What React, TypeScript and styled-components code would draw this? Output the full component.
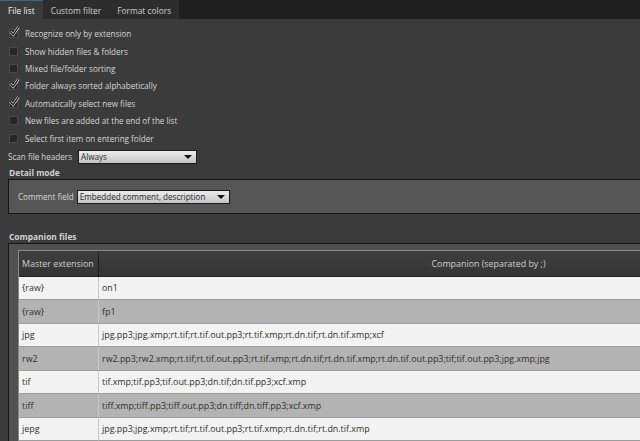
import styled, { createGlobalStyle } from "styled-components";

const GlobalStyle = createGlobalStyle`
  html, body {
    margin: 0;
    padding: 0;
    background: #3b3b3b;
    overflow: hidden;
  }
  body {
    font-family: "Open Sans", "Noto Sans", sans-serif;
    font-size: 8.1px;
    color: #d6d6d6;
  }
`;

const tabs = ["File list", "Custom filter", "Format colors"];

const options = [
  { label: "Recognize only by extension", checked: true },
  { label: "Show hidden files & folders", checked: false },
  { label: "Mixed file/folder sorting", checked: false },
  { label: "Folder always sorted alphabetically", checked: true },
  { label: "Automatically select new files", checked: true },
  { label: "New files are added at the end of the list", checked: false },
  { label: "Select first item on entering folder", checked: false },
];

const companions = [
  ["{raw}", "on1"],
  ["{raw}", "fp1"],
  ["jpg", "jpg.pp3;jpg.xmp;rt.tif;rt.tif.out.pp3;rt.tif.xmp;rt.dn.tif;rt.dn.tif.xmp;xcf"],
  [
    "rw2",
    "rw2.pp3;rw2.xmp;rt.tif;rt.tif.out.pp3;rt.tif.xmp;rt.dn.tif;rt.dn.tif.xmp;rt.dn.tif.out.pp3;tif;tif.out.pp3;jpg.xmp;jpg",
  ],
  ["tif", "tif.xmp;tif.pp3;tif.out.pp3;dn.tif;dn.tif.pp3;xcf.xmp"],
  ["tiff", "tiff.xmp;tiff.pp3;tiff.out.pp3;dn.tiff;dn.tiff.pp3;xcf.xmp"],
  ["jepg", "jpg.pp3;jpg.xmp;rt.tif;rt.tif.out.pp3;rt.tif.xmp;rt.dn.tif;rt.dn.tif.xmp"],
];

function Check({ checked }: { checked: boolean }) {
  return (
    <Box>
      {checked && (
        <CheckMark viewBox="0 0 12 12">
          <path d="M1.5 6.5 L4.5 9.5 L10.5 1" fill="none" stroke="#eaeaea" strokeWidth="2.8" />
          <path d="M1.5 6.5 L4.5 9.5 L10.5 1" fill="none" stroke="#151515" strokeWidth="1.4" />
        </CheckMark>
      )}
    </Box>
  );
}

function Combo({ value, width }: { value: string; width: number }) {
  return (
    <ComboBox $width={width}>
      <span>{value}</span>
      <Arrow />
    </ComboBox>
  );
}

export default function App() {
  return (
    <>
      <GlobalStyle />
      <TabBar>
        {tabs.map((t, i) => (
          <Tab key={t} $active={i === 0}>
            {t}
          </Tab>
        ))}
      </TabBar>
      <Page>
        <CheckList>
          {options.map((o) => (
            <CheckRow key={o.label}>
              <Check checked={o.checked} />
              <span>{o.label}</span>
            </CheckRow>
          ))}
        </CheckList>
        <FieldRow $gap={6}>
          <span>Scan file headers</span>
          <Combo value="Always" width={119} />
        </FieldRow>

        <SectionTitle>Detail mode</SectionTitle>
        <DetailFrame>
          <FieldRow>
            <span>Comment field</span>
            <Combo value="Embedded comment, description" width={153} />
          </FieldRow>
        </DetailFrame>

        <SectionTitle $gap={16}>Companion files</SectionTitle>
        <CompanionFrame>
          <Table>
            <HeadCell>Master extension</HeadCell>
            <HeadCell $center>Companion (separated by ;)</HeadCell>
            {companions.map(([ext, list], i) => (
              <Row key={i} $odd={i % 2 === 1}>
                <Cell>{ext}</Cell>
                <Cell>{list}</Cell>
              </Row>
            ))}
          </Table>
        </CompanionFrame>
      </Page>
    </>
  );
}

const TabBar = styled.div`
  display: flex;
  height: 19px;
  background: #1f1f1f;
`;

const Tab = styled.div<{ $active?: boolean }>`
  display: flex;
  align-items: center;
  padding: 1px 8px 0 8px;
  font-size: 8.4px;
  background: ${(p) => (p.$active ? "#3b3b3b" : "#2c2c2c")};
  color: ${(p) => (p.$active ? "#f0f0f0" : "#cfcfcf")};
  border-top: 1px solid ${(p) => (p.$active ? "#3f6489" : "#2c2c2c")};
`;

const Page = styled.div`
  width: 868px;
  padding-left: 8px;
`;

const CheckList = styled.div`
  display: flex;
  flex-direction: column;
  padding-top: 6px;
`;

const CheckRow = styled.div`
  display: flex;
  align-items: center;
  gap: 7px;
  height: 17.4px;
  padding-left: 1px;
`;

const Box = styled.div`
  position: relative;
  width: 7px;
  height: 7px;
  background: #262626;
  border: 1px solid #4a4a4a;
`;

const CheckMark = styled.svg`
  position: absolute;
  left: -1px;
  top: -4px;
  width: 11px;
  height: 11px;
`;

const FieldRow = styled.div<{ $gap?: number }>`
  display: flex;
  align-items: center;
  gap: ${(p) => p.$gap ?? 3}px;
  height: 18px;
  margin-top: 1px;
`;

const ComboBox = styled.div<{ $width: number }>`
  display: flex;
  align-items: center;
  justify-content: space-between;
  box-sizing: border-box;
  width: ${(p) => p.$width}px;
  height: 14px;
  padding: 0 4px 0 2px;
  border: 1px solid #1a1a1a;
  background: linear-gradient(#ececec, #c4c4c4);
  color: #2a2a2a;
`;

const Arrow = styled.div`
  width: 0;
  height: 0;
  border-left: 4px solid transparent;
  border-right: 4px solid transparent;
  border-top: 4px solid #111;
`;

const SectionTitle = styled.div<{ $gap?: number }>`
  font-weight: 700;
  font-size: 8.4px;
  color: #d0d0d0;
  margin-top: ${(p) => p.$gap ?? 0}px;
  padding-left: 1px;
  height: 13px;
  line-height: 13px;
`;

const DetailFrame = styled.div`
  box-sizing: border-box;
  height: 35px;
  background: #565656;
  border: 1px solid #151515;
  border-right: none;
  padding: 0 0 0 9px;
  display: flex;
  align-items: center;
  color: #d8d8d8;
`;

const CompanionFrame = styled.div`
  background: #505050;
  border-top: 1px solid #151515;
  border-left: 1px solid #151515;
  padding: 6px 0 0 9px;
`;

const Table = styled.div`
  display: grid;
  grid-template-columns: 80px 1fr;
  border-top: 1px solid #8a8a8a;
  border-left: 1px solid #8a8a8a;
  font-size: 8.9px;
`;

const HeadCell = styled.div<{ $center?: boolean }>`
  display: flex;
  align-items: center;
  justify-content: ${(p) => (p.$center ? "center" : "flex-start")};
  height: 25px;
  padding-left: 3px;
  background: linear-gradient(#3e3e3e, #353535);
  color: #cfcfcf;
  border-right: 1px solid #1e1e1e;
  border-bottom: 1px solid #222;
`;

const Row = styled.div<{ $odd: boolean }>`
  display: contents;
  & > div {
    background: ${(p) => (p.$odd ? "#b3b3b3" : "#f3f3f3")};
  }
`;

const Cell = styled.div`
  display: flex;
  align-items: center;
  box-sizing: border-box;
  height: 23.5px;
  padding-left: 3px;
  color: #2e2e2e;
  border-right: 1px solid #c8c8c8;
  border-bottom: 1px solid #9c9c9c;
  white-space: nowrap;
  overflow: hidden;
`;
